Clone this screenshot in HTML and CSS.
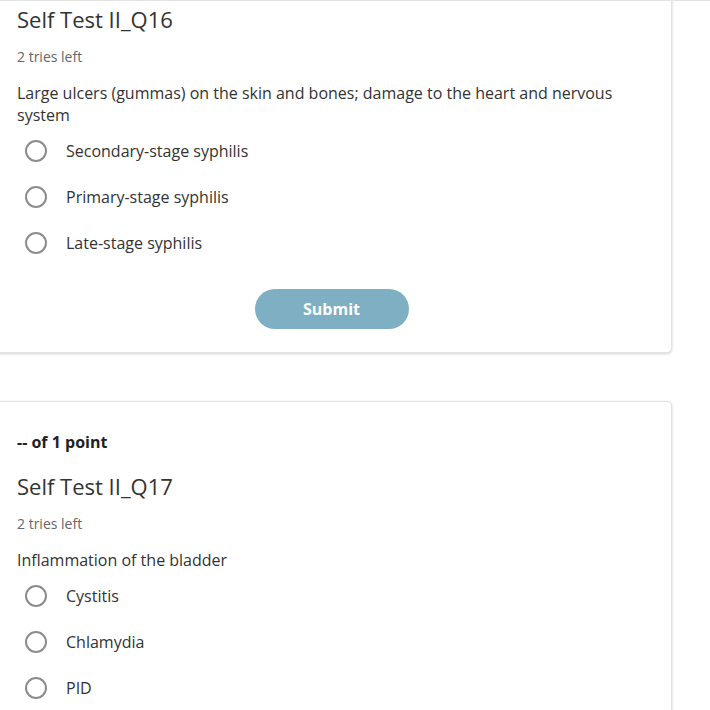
FILE: index.html
```html
<!DOCTYPE html>
<html lang="en">
<head>
  <meta charset="UTF-8" />
  <title>Self Test II</title>
  <meta name="viewport" content="width=device-width, initial-scale=1">
  <link rel="stylesheet" href="styles.css">
</head>
<body>
  <div class="page">
    <div class="card">
      <h2 class="title">Self Test II_Q16</h2>
      <div class="tries">2 tries left</div>
      <p class="question">Large ulcers (gummas) on the skin and bones; damage to the heart and nervous system</p>
      <div class="options">
        <label class="option"><span class="radio"></span>Secondary-stage syphilis</label>
        <label class="option"><span class="radio"></span>Primary-stage syphilis</label>
        <label class="option"><span class="radio"></span>Late-stage syphilis</label>
      </div>
      <div class="actions">
        <button class="submit">Submit</button>
      </div>
    </div>

    <div class="card">
      <div class="points">-- of 1 point</div>
      <h2 class="title">Self Test II_Q17</h2>
      <div class="tries">2 tries left</div>
      <p class="question">Inflammation of the bladder</p>
      <div class="options">
        <label class="option"><span class="radio"></span>Cystitis</label>
        <label class="option"><span class="radio"></span>Chlamydia</label>
        <label class="option"><span class="radio"></span>PID</label>
      </div>
    </div>
  </div>
</body>
</html>
```

FILE: styles.css
```css
body {
  font-family: 'Open Sans', 'Noto Sans', sans-serif;
  background: #fff;
  color: #333;
  margin: 0;
}
.page {
  border-top: 1px solid #e3e3e3;
  overflow: hidden;
  height: 709px;
}
.card {
  box-sizing: border-box;
  width: 693px;
  margin: 0 0 48px -21px;
  padding: 29px 25px 23px 37px;
  background: #fff;
  border: 1px solid #e2e2e2;
  border-radius: 5px;
  box-shadow: 0 1px 3px rgba(0,0,0,0.18);
}
.card:first-child {
  margin-top: -45px;
}
.points {
  font-size: 16px;
  line-height: 22px;
  font-weight: 700;
  color: #222;
}
.title {
  margin: 18px 0 0;
  font-size: 22px;
  line-height: 30px;
  font-weight: 400;
  color: #333;
}
.tries {
  margin-top: 13px;
  font-size: 14px;
  line-height: 20px;
  color: #666;
}
.question {
  margin: 15px 0 0;
  font-size: 16px;
  line-height: 22px;
}
.options {
  margin-top: 2px;
}
.option {
  display: flex;
  align-items: center;
  height: 46px;
  padding-left: 8px;
  font-size: 16px;
  cursor: pointer;
}
.radio {
  box-sizing: border-box;
  width: 22px;
  height: 22px;
  margin-right: 19px;
  border: 2px solid #8c8c8c;
  border-radius: 50%;
  flex-shrink: 0;
}
.actions {
  display: flex;
  justify-content: center;
  margin-top: 23px;
}
.submit {
  width: 154px;
  height: 40px;
  border: none;
  border-radius: 20px;
  background: #7eafc2;
  color: #fff;
  font-family: inherit;
  font-size: 16px;
  font-weight: 700;
  cursor: pointer;
}
```
